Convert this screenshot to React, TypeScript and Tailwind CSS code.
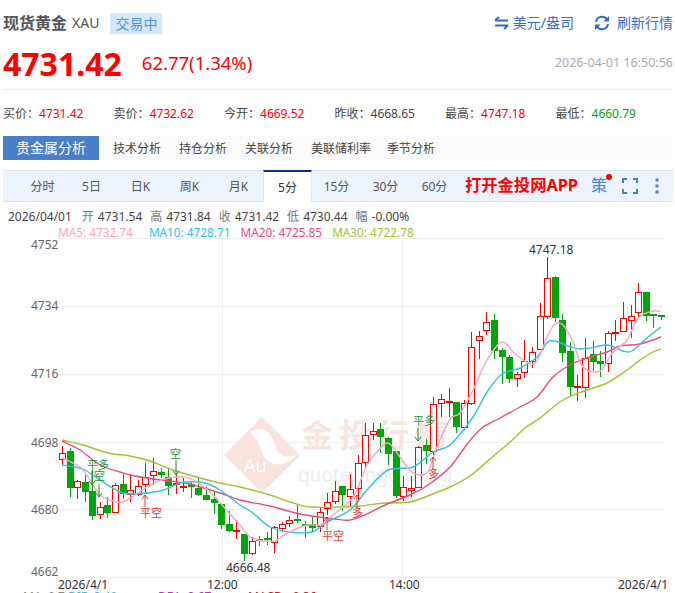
import * as React from "react";

// [bodyTop, bodyBottom, wickTop, wickBottom, up]
const candles: [number, number, number, number, number][] = [
  [453, 459, 446, 465, 1], [451, 488, 448, 497, 0], [481, 487, 480, 499, 1], [482, 492, 475, 502, 0],
  [491, 516, 470, 520, 0], [507, 514, 502, 519, 1], [505, 513, 497, 518, 0], [485, 512, 483, 512, 1],
  [484, 494, 474, 499, 0], [490, 494, 474, 502, 1], [486, 494, 480, 496, 1], [477, 484, 463, 493, 1],
  [471, 475, 458, 485, 1], [472, 475, 468, 478, 0], [477, 486, 468, 495, 0], [483, 484, 473, 494, 1],
  [486, 487, 478, 492, 1], [484, 487, 482, 498, 0], [488, 495, 478, 496, 0], [495, 500, 487, 500, 0],
  [499, 503, 492, 514, 0], [504, 525, 504, 529, 0], [524, 531, 511, 532, 0], [530, 531, 520, 539, 1],
  [534, 554, 534, 561, 0], [541, 553, 537, 555, 1], [539, 540, 536, 546, 0], [538, 540, 532, 545, 0],
  [527, 542, 526, 553, 1], [524, 528, 522, 532, 1], [520, 523, 516, 527, 1], [519, 521, 505, 523, 0],
  [524, 526, 521, 538, 0], [524, 528, 517, 532, 0], [512, 526, 508, 532, 1], [502, 508, 493, 515, 1],
  [491, 501, 481, 504, 1], [486, 495, 486, 511, 0], [489, 496, 474, 507, 1], [463, 488, 455, 500, 1],
  [435, 462, 423, 467, 1], [431, 434, 423, 440, 1], [429, 437, 423, 453, 0], [438, 454, 437, 465, 0],
  [451, 496, 451, 498, 0], [487, 496, 476, 501, 1], [488, 490, 476, 497, 1], [447, 487, 446, 487, 1],
  [445, 451, 439, 464, 0], [404, 451, 397, 455, 1], [399, 403, 394, 417, 1], [401, 402, 388, 417, 1],
  [402, 427, 402, 433, 0], [403, 427, 400, 430, 1], [347, 403, 332, 405, 1], [336, 340, 331, 359, 1],
  [322, 330, 312, 335, 1], [320, 351, 314, 359, 0], [350, 357, 348, 384, 0], [357, 379, 355, 383, 0],
  [374, 378, 372, 387, 1], [361, 372, 340, 378, 1], [352, 361, 347, 368, 1], [316, 349, 303, 350, 1],
  [278, 316, 257, 319, 1], [277, 318, 276, 322, 0], [320, 353, 314, 362, 0], [351, 387, 342, 396, 0],
  [386, 387, 375, 401, 1], [358, 387, 338, 398, 1], [354, 362, 341, 371, 0], [361, 364, 351, 377, 0],
  [333, 363, 331, 372, 1], [332, 333, 320, 341, 1], [318, 331, 302, 332, 1], [316, 320, 305, 338, 1],
  [292, 312, 283, 318, 1], [292, 316, 292, 321, 0], [314, 315, 314, 328, 0], [315, 316, 315, 320, 0],
];

const ma30: [number, number][] = [[62, 440], [83, 445], [108, 453], [130, 456], [150, 461], [173, 470], [200, 478], [220, 483], [240, 487], [270, 495], [290, 502], [310, 507], [340, 507], [360, 506], [385, 503], [410, 502], [430, 495], [450, 487], [470, 476], [490, 459], [510, 442], [525, 428], [540, 418], [563, 400], [587, 390], [607, 383], [627, 370], [640, 360], [653, 352], [661, 349]];
const ma20: [number, number][] = [[62, 441], [80, 450], [100, 465], [120, 472], [135, 476], [160, 480], [185, 483], [200, 487], [220, 493], [240, 500], [270, 506], [300, 514], [335, 519], [350, 520], [365, 515], [385, 505], [410, 495], [428, 485], [450, 467], [468, 443], [482, 428], [500, 418], [520, 407], [537, 397], [553, 377], [570, 365], [587, 358], [607, 352], [620, 346], [640, 344], [661, 337]];
const ma10: [number, number][] = [[62, 465], [75, 467], [85, 470], [100, 480], [120, 492], [135, 494], [160, 491], [175, 485], [185, 482], [205, 483], [220, 490], [240, 505], [253, 513], [270, 527], [290, 532], [312, 532], [327, 522], [350, 510], [367, 490], [388, 470], [413, 467], [433, 452], [450, 445], [473, 417], [487, 392], [502, 374], [520, 368], [537, 357], [547, 343], [555, 341], [580, 349], [607, 345], [623, 351], [632, 351], [647, 338], [661, 327]];
const ma5: [number, number][] = [[62, 458], [80, 467], [90, 480], [100, 495], [110, 500], [122, 502], [135, 495], [150, 485], [165, 479], [185, 477], [200, 484], [215, 497], [228, 512], [240, 525], [250, 537], [263, 541], [275, 541], [287, 533], [307, 525], [320, 525], [333, 515], [353, 497], [367, 465], [377, 452], [388, 443], [400, 457], [412, 472], [427, 473], [437, 447], [450, 419], [460, 413], [473, 390], [487, 360], [502, 342], [513, 352], [523, 360], [533, 364], [540, 355], [547, 337], [555, 324], [563, 325], [573, 342], [583, 367], [600, 371], [613, 352], [627, 340], [638, 318], [653, 311], [661, 312]];

// Catmull-Rom through the points
function smooth(p: [number, number][]) {
  let d = `M${p[0][0]} ${p[0][1]}`;
  for (let i = 0; i < p.length - 1; i++) {
    const a = p[Math.max(i - 1, 0)];
    const b = p[i];
    const c = p[i + 1];
    const e = p[Math.min(i + 2, p.length - 1)];
    d += ` C${b[0] + (c[0] - a[0]) / 6} ${b[1] + (c[1] - a[1]) / 6} ${c[0] - (e[0] - b[0]) / 6} ${c[1] - (e[1] - b[1]) / 6} ${c[0]} ${c[1]}`;
  }
  return d;
}

const UP = "#ff0000";
const DOWN = "#00a60a";

function Arrow({ x, y1, y2, color }: { x: number; y1: number; y2: number; color: string }) {
  // y1 is the tail, y2 the head
  const s = y2 > y1 ? -1 : 1;
  return (
    <path
      d={`M${x} ${y1}V${y2}M${x - 3} ${y2 + s * 4}L${x} ${y2}L${x + 3} ${y2 + s * 4}`}
      stroke={color}
      fill="none"
      strokeWidth="1"
    />
  );
}

function Chart() {
  const labels: [string, number][] = [["4752", 249], ["4734", 310], ["4716", 378], ["4698", 447], ["4680", 514], ["4662", 576]];
  const mark = "#e8382f";
  const markG = "#1f8f3a";
  return (
    <svg width="675" height="355" viewBox="0 238 675 355" className="block">
      {[238, 306, 374, 442, 509, 577].map((y) => (
        <line key={y} x1="58" x2="663" y1={y + 0.5} y2={y + 0.5} stroke="#eeeeee" />
      ))}
      {[222, 402].map((x) => (
        <line key={x} x1={x + 0.5} x2={x + 0.5} y1="238" y2="577" stroke="#eeeeee" />
      ))}

      {/* watermark */}
      <path d="M262 417L300 455L262 493L224 455Z" fill="#f9e3dd" />
      <path d="M250 432C262 425 272 432 275 445C278 458 288 458 296 455C286 468 268 468 262 452C258 441 254 436 250 432Z" fill="#ffffff" />
      <text x="244" y="472" fontSize="18" fill="#ffffff">Au</text>
      <text x="301" y="447" fontSize="32" fontWeight="700" letterSpacing="6" fill="#f7e6e0">金投行情</text>
      <text x="298" y="482" fontSize="19" fill="#efecec">quote.cngold.org</text>

      {candles.map((c, i) => {
        const x = Math.round(62 + i * 7.58) + 0.5;
        const color = c[4] ? UP : DOWN;
        const flat = c[1] - c[0] <= 1;
        return (
          <g key={i}>
            <line x1={x} x2={x} y1={c[2]} y2={c[4] && !flat ? c[0] : c[3]} stroke={color} />
            {c[4] && !flat ? <line x1={x} x2={x} y1={c[1]} y2={c[3]} stroke={color} /> : null}
            {flat ? (
              <rect x={x - 3.5} y={c[0]} width="7" height="2" fill={color} />
            ) : c[4] ? (
              <rect x={x - 3} y={c[0] + 0.5} width="6" height={c[1] - c[0]} fill="#fff" stroke={color} />
            ) : (
              <rect x={x - 3.5} y={c[0]} width="7" height={c[1] - c[0]} fill={color} />
            )}
          </g>
        );
      })}

      <path d={smooth(ma30)} fill="none" stroke="#a3c22d" strokeWidth="1.4" />
      <path d={smooth(ma20)} fill="none" stroke="#ec4a80" strokeWidth="1.4" />
      <path d={smooth(ma10)} fill="none" stroke="#2fc3e4" strokeWidth="1.4" />
      <path d={smooth(ma5)} fill="none" stroke="#fba6c1" strokeWidth="1.4" />

      {/* trade signals */}
      <g fontSize="11">
        <text x="87" y="469" fill={markG}>平多</text>
        <text x="94" y="480" fill={markG}>空</text>
        <Arrow x={92} y1={471} y2={485} color={markG} />
        <Arrow x={99} y1={484} y2={497} color={markG} />
        <text x="140" y="517" fill={mark}>平空</text>
        <Arrow x={145} y1={507} y2={495} color={mark} />
        <text x="170" y="458" fill={markG}>空</text>
        <Arrow x={176} y1={460} y2={475} color={markG} />
        <text x="322" y="540" fill={mark}>平空</text>
        <Arrow x={327} y1={530} y2={517} color={mark} />
        <text x="352" y="517" fill={mark}>多</text>
        <Arrow x={357} y1={508} y2={495} color={mark} />
        <text x="428" y="478" fill={mark}>多</text>
        <Arrow x={433} y1={470} y2={457} color={mark} />
        <text x="413" y="425" fill={markG}>平多</text>
        <Arrow x={418} y1={428} y2={441} color={markG} />
      </g>

      <g fontSize="12" fill="#666666">
        {labels.map(([t, y]) => (
          <text key={t} x="31" y={y}>{t}</text>
        ))}
      </g>
      <g fontSize="12" fill="#333333">
        <text x="529" y="254">4747.18</text>
        <text x="226" y="572">4666.48</text>
        <text x="58" y="589">2026/4/1</text>
        <text x="207" y="589">12:00</text>
        <text x="389" y="589">14:00</text>
        <text x="618" y="589">2026/4/1</text>
      </g>
      {/* indicator legend, cut off by the window */}
      <g fontSize="12">
        <text x="23" y="601" fill="#888888">MA: 9.7</text>
        <text x="68" y="601" fill="#2fc3e4">DIF: 8.49</text>
        <text x="158" y="601" fill="#d61fc8">DEA: 8.67</text>
        <text x="248" y="601" fill="#ff0000">MACD: -0.36</text>
      </g>
    </svg>
  );
}

function Stat({ label, value, color }: { label: string; value: string; color: string }) {
  return (
    <div>
      <span className="text-[#444]">{label}：</span>
      <span className={color}>{value}</span>
    </div>
  );
}

function Ohlc({ label, value }: { label: string; value: string }) {
  return (
    <span className="flex gap-[4px]">
      <span className="text-[#777]">{label}</span>
      <span>{value}</span>
    </span>
  );
}

export default function App() {
  const tabs = ["技术分析", "持仓分析", "关联分析", "美联储利率", "季节分析"];
  const periods = ["分时", "5日", "日K", "周K", "月K", "5分", "15分", "30分", "60分"];

  return (
    <div className="h-[593px] w-[675px] overflow-hidden bg-white font-['Noto_Sans','Noto_Sans_CJK_SC',sans-serif] text-xs text-[#333]">
      {/* header */}
      <div className="flex h-[38px] items-center pl-[3px] pr-[2px] pt-[8px]">
        <span className="text-base leading-none font-bold text-[#555]">现货黄金</span>
        <span className="ml-[5px] text-sm text-[#555]">XAU</span>
        <span className="ml-[11px] bg-[#d4e8fc] px-[5px] py-[1px] text-sm leading-[19px] text-[#4a97e0]">交易中</span>
        <div className="ml-auto flex items-center text-sm text-[#3a6fc4]">
          <svg width="15" height="14" viewBox="0 0 15 14" className="mr-[4px]">
            <path d="M1 4.5H14M1 4.5L5 1" stroke="#2e6bc6" strokeWidth="2" fill="none" />
            <path d="M1 9.5H14M14 9.5L10 13" stroke="#2e6bc6" strokeWidth="2" fill="none" />
          </svg>
          <span>美元/盎司</span>
          <svg width="16" height="16" viewBox="0 0 16 16" className="mr-[7px] ml-[20px]">
            <path d="M2 7A6 6 0 0 1 13 4.5M14 9A6 6 0 0 1 3 11.5" stroke="#2e6bc6" strokeWidth="2" fill="none" />
            <path d="M15 1V6.5H9.5ZM1 15V9.5H6.5Z" fill="#2e6bc6" />
          </svg>
          <span>刷新行情</span>
        </div>
      </div>

      {/* price */}
      <div className="mx-[3px] mr-[2px] flex h-[52px] items-center border-b border-[#eee]">
        <span className="text-[32px] leading-none font-bold text-[#ff0000]">4731.42</span>
        <span className="ml-[20px] text-[18.5px] text-[#ff0000]">62.77(1.34%)</span>
        <span className="ml-auto text-[12.5px] text-[#aaa]">2026-04-01 16:50:56</span>
      </div>

      {/* day stats */}
      <div className="mt-[15px] grid h-[18px] w-[666px] grid-cols-6 pl-[3px] leading-[18px]">
        <Stat label="买价" value="4731.42" color="text-[#ff0000]" />
        <Stat label="卖价" value="4732.62" color="text-[#ff0000]" />
        <Stat label="今开" value="4669.52" color="text-[#ff0000]" />
        <Stat label="昨收" value="4668.65" color="text-[#444]" />
        <Stat label="最高" value="4747.18" color="text-[#ff0000]" />
        <Stat label="最低" value="4660.79" color="text-[#00a60a]" />
      </div>

      {/* analysis tabs */}
      <div className="mx-[3px] mt-[13px] flex h-[24px] items-center bg-[#fafafa]">
        <div className="flex h-full w-[96px] items-center justify-center bg-[#4a7fcb] text-sm text-white">贵金属分析</div>
        <div className="ml-[5px] flex pt-px">
          {tabs.map((t, i) => (
            <span key={t} className={i === 4 ? "pr-[9px] pl-[7px] text-[#444]" : "px-[9px] text-[#444]"}>{t}</span>
          ))}
        </div>
      </div>

      {/* period toolbar */}
      <div className="mt-[10px] mr-[2px] ml-[3px] flex h-[32px] items-center border-y border-[#dfe6f1] bg-[#edf3fc] pl-[15px]">
        {periods.map((p) => (
          <div
            key={p}
            className={
              p === "5分"
                ? "-mt-px -mb-px flex h-[32px] w-[49px] items-center justify-center border-x border-t-2 border-x-[#dfe6f1] border-t-[#0d2d8c] bg-white pt-[2px]"
                : "flex w-[49px] items-center justify-center pt-px text-[#555]"
            }
          >
            {p}
          </div>
        ))}
        <span className="ml-[6px] text-[16.3px] font-bold text-[#ff0000]">打开金投网APP</span>
        <span className="relative ml-[13px] text-[16px] text-[#4a7fcb]">
          策
          <span className="absolute -top-[1px] -right-[5px] h-[6px] w-[6px] rounded-full bg-[#ff0000]" />
        </span>
        <svg width="16" height="16" viewBox="0 0 16 16" className="ml-[15px]">
          <path d="M1 5V1H5M11 1H15V5M15 11V15H11M5 15H1V11" stroke="#4a7fcb" strokeWidth="2" fill="none" />
        </svg>
        <svg width="4" height="16" viewBox="0 0 4 16" className="ml-[17px]">
          <rect x="0.5" y="0.5" width="3" height="3" fill="#4a7fcb" />
          <rect x="0.5" y="6.5" width="3" height="3" fill="#4a7fcb" />
          <rect x="0.5" y="12.5" width="3" height="3" fill="#4a7fcb" />
        </svg>
      </div>

      {/* candle info */}
      <div className="mt-[7px] flex h-[16px] items-center gap-[8px] pl-[8px] leading-[16px] text-[#444]">
        <span className="mr-[2px]">2026/04/01</span>
        <Ohlc label="开" value="4731.54" />
        <Ohlc label="高" value="4731.84" />
        <Ohlc label="收" value="4731.42" />
        <Ohlc label="低" value="4730.44" />
        <Ohlc label="幅" value="-0.00%" />
      </div>
      <div className="flex h-[14px] items-center gap-[10px] pl-[58px] text-[11.8px] leading-[14px]">
        <span className="mr-[6px] text-[#fba6c1]">MA5: 4732.74</span>
        <span className="text-[#2fc3e4]">MA10: 4728.71</span>
        <span className="text-[#ec4a80]">MA20: 4725.85</span>
        <span className="text-[#a3c22d]">MA30: 4722.78</span>
      </div>

      <div className="-mt-px">
        <Chart />
      </div>
    </div>
  );
}
